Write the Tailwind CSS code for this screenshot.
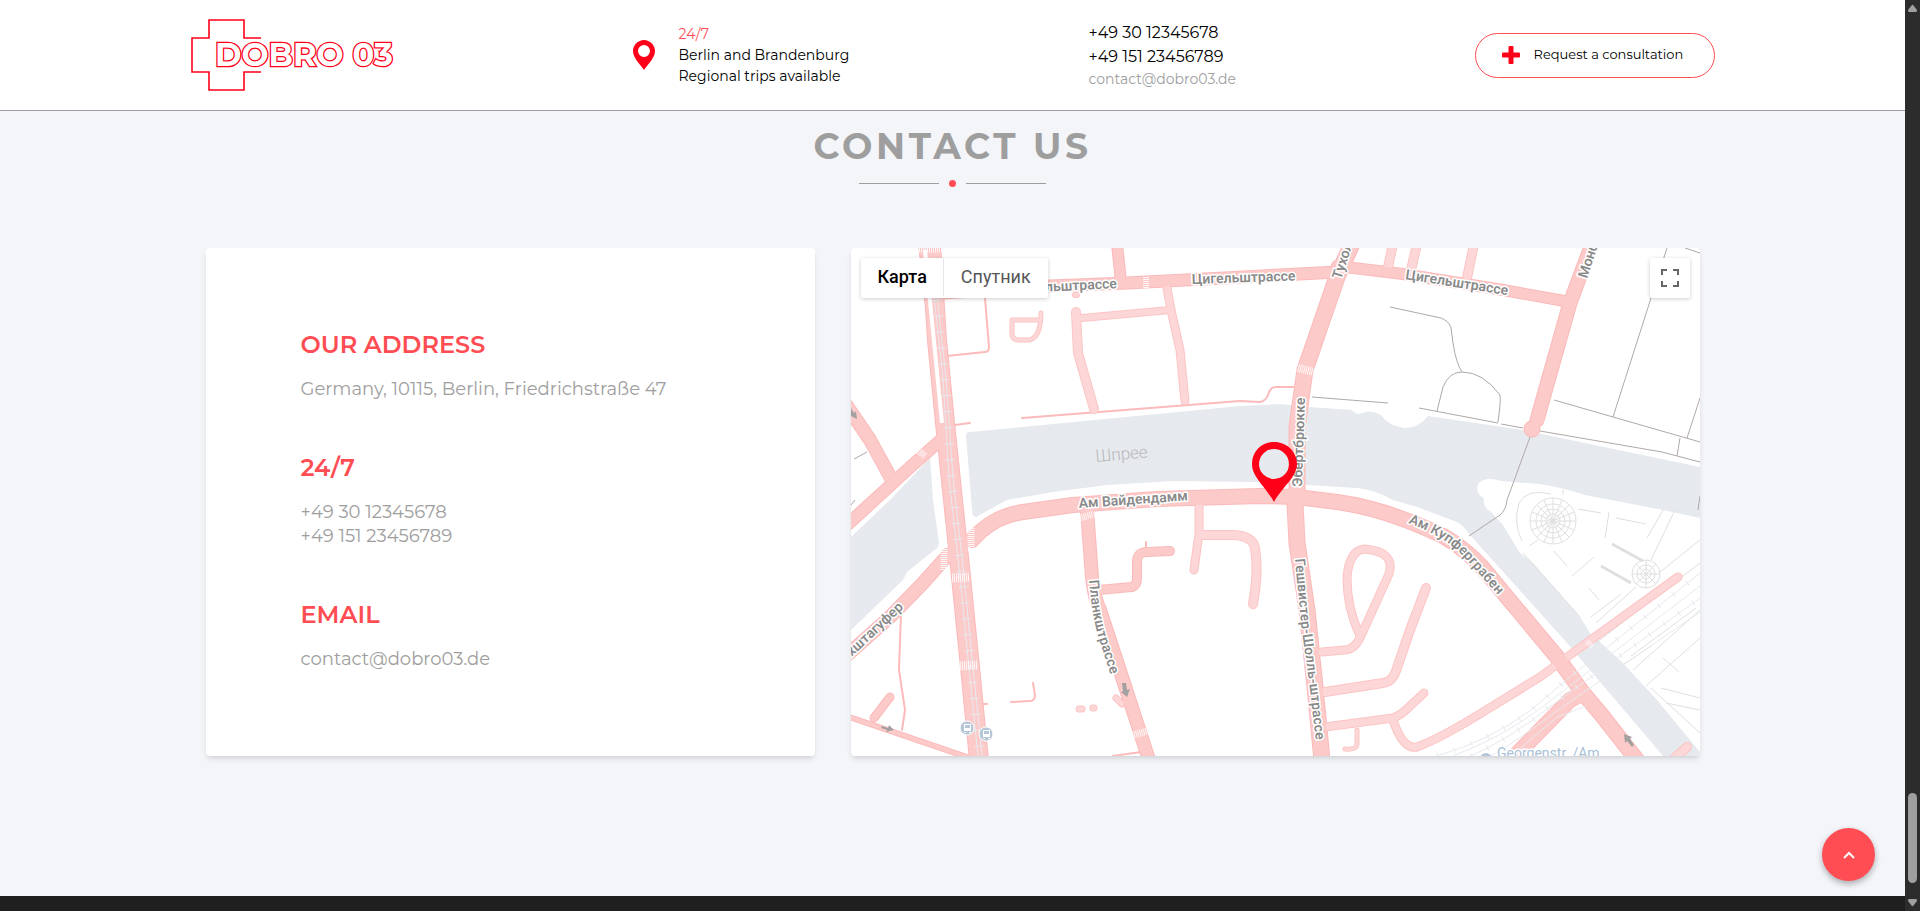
<!DOCTYPE html>
<html lang="en">
<head>
    <meta charset="UTF-8">
    <meta name="viewport" content="width=device-width, initial-scale=1.0">
    <title>DOBRO 03 - Contact us</title>
    <script src="https://cdn.jsdelivr.net/npm/@tailwindcss/browser@4"></script>
</head>
<body class="bg-[#f3f5f9] font-[Montserrat,Inter,sans-serif] text-black">
    <div class="flex min-h-screen">
        <div class="flex min-w-0 flex-1 flex-col">

            <header class="border-b border-[#9e9fa4] bg-white">
                <div class="mx-auto flex h-[110px] w-4/5 items-center justify-between">
                    <a href="#" aria-label="DOBRO 03">
                        <svg width="203" height="72" viewBox="0 0 203 72" fill="none" stroke="#ff0019">
                            <path d="M70 19H53V1H18V19H1V53H18V71H53V53H70" stroke-width="1.6"/>
                            <text x="24" y="47" fill="#fff" font-family="Montserrat, Inter, sans-serif" font-size="32" font-weight="700" stroke-width="2.6" paint-order="stroke">DOBRO 03</text>
                        </svg>
                    </a>

                    <div class="flex items-center gap-6">
                        <svg width="22" height="30" viewBox="0 0 22 30" fill="#ff0019">
                            <path fill-rule="evenodd" d="M11 0C5 0 0 5 0 11c0 7 7 13 11 19 4-6 11-12 11-19C22 5 17 0 11 0zm0 5a6 6 0 1 1 0 12a6 6 0 0 1 0-12z"/>
                        </svg>
                        <div class="w-[171px] text-sm leading-[21px] whitespace-nowrap">
                            <p class="text-[#ff4d53]">24/7</p>
                            <p>Berlin and Brandenburg</p>
                            <p>Regional trips available</p>
                        </div>
                    </div>

                    <div class="flex w-[147px] flex-col text-base leading-6 whitespace-nowrap">
                        <a href="tel:+493012345678">+49 30 12345678</a>
                        <a href="tel:+4915123456789">+49 151 23456789</a>
                        <a href="mailto:contact@dobro03.de" class="text-sm leading-[21px] text-[#9e9e9e]">contact@dobro03.de</a>
                    </div>

                    <button class="flex h-[45px] w-60 items-center gap-3.5 rounded-full border border-[#ff4d53] pl-[26px] text-[13px] whitespace-nowrap">
                        <svg width="18" height="18" viewBox="0 0 18 18" fill="#ff0019"><rect x="6.5" width="5" height="18" rx="1"/><rect y="6.5" width="18" height="5" rx="1"/></svg>
                        Request a consultation
                    </button>
                </div>
            </header>

            <main class="mx-auto w-4/5 flex-1 px-[15px] pt-[13px] pb-[140px]">
                <h1 class="text-center text-4xl leading-[44px] font-bold tracking-widest text-[#9e9e9e]">CONTACT US</h1>
                <div class="mt-3 flex items-center justify-center gap-2.5">
                    <span class="h-px w-20 bg-[#9e9e9e]"></span>
                    <span class="size-[7px] rounded-full bg-[#ff4d53]"></span>
                    <span class="h-px w-20 bg-[#9e9e9e]"></span>
                </div>

                <div class="mt-[61px] grid grid-cols-[609fr_849fr] gap-9">
                    <section class="rounded-sm bg-white px-[95px] pt-[81px] text-lg leading-6 text-[#9e9e9e] shadow-md">
                        <h2 class="mb-4 text-2xl leading-8 font-semibold text-[#ff4d53]">OUR ADDRESS</h2>
                        <p class="mb-[51px]">Germany, 10115, Berlin, Friedrichstraße 47</p>
                        <h2 class="mb-4 text-2xl leading-8 font-semibold text-[#ff4d53]">24/7</h2>
                        <p class="mb-[51px]">
                            <a href="tel:+493012345678">+49 30 12345678</a><br>
                            <a href="tel:+4915123456789">+49 151 23456789</a>
                        </p>
                        <h2 class="mb-4 text-2xl leading-8 font-semibold text-[#ff4d53]">EMAIL</h2>
                        <p><a href="mailto:contact@dobro03.de">contact@dobro03.de</a></p>
                    </section>

                    <section class="relative h-[508px] overflow-hidden rounded-sm bg-white font-[Roboto,sans-serif] shadow-md">
                        <svg class="size-full" viewBox="0 0 849 508" preserveAspectRatio="xMidYMid slice" fill="none">
                            <!-- water -->
                            <g fill="#e6e9ee">
                                <path d="M115 188Q115 184 119 184L171 179L389 158L429 156L457 159L501 162Q506 168 511 165Q519 161 530 167Q537 178 554 180Q568 180 577 168L672 182L849 219V270L812 262L734 247Q705 238 688 236L650 233Q634 228 627 236Q624 246 633 250Q631 258 640 264L652 277L669 305L682 315L729 369L739 385L772 415L806 452L849 504V508H812L716 395L619 287Q612 277 606 274L566 259L542 252Q524 242 506 240L456 237L402 234L322 233L256 237L202 244L156 252L125 269Q121 269 121 262Z"/>
                                <path d="M79 210L82 252L88 295Q87 301 81 304L56 324L52 332L0 382V289L39 252Z"/>
                            </g>

                            <!-- museum island buildings -->
                            <g stroke="#dfdfdf" stroke-width="1">
                                <circle cx="702" cy="273" r="23"/><circle cx="702" cy="273" r="17"/><circle cx="702" cy="273" r="12"/><circle cx="702" cy="273" r="7"/>
                                <path d="M702 250V296M679 273H725M686 257L718 289M686 289L718 257M693 252L711 294M711 252L693 294M681 264L723 282M681 282L723 264"/>
                                <circle cx="795" cy="326" r="14"/><circle cx="795" cy="326" r="9"/><circle cx="795" cy="326" r="5"/>
                                <path d="M795 312V340M781 326H809M785 316L805 336M785 336L805 316"/>
                                <path d="M727 261L750 265M758 264L754 290M765 270L795 276M671 293Q662 275 668 255Q676 240 700 246M678 298L687 292M703 303L716 318M721 328L743 309M738 340L748 352M745 375L785 339M740 369L770 346M809 324L849 292M812 262L796 290M824 262L800 312M712 247V242M672 305L729 369M773 416L800 398M782 422L849 362M795 438L849 390M800 440L849 485M812 410L828 424M780 408L845 360M810 440L849 450M815 455L849 462M745 395L849 315"/>
                                <path d="M761 296L792 313M750 318L780 335" stroke-width="3"/>
                            </g>

                            <g id="roads"></g>

                            <!-- tram and railway tracks -->
                            <path d="M74 2L91 175" stroke="#fff" stroke-width="4"/>
                            <g stroke="#e6e9ee">
                                <path d="M80 20L92 130L98 230L108 319L116 400L127 508" stroke-width="1"/>
                                <path d="M83 20L95 130L102 230L112 319L120 400L131 508" stroke-width="1"/>
                                <path d="M82 20L94 130L100 230L110 319L118 400L129 508" stroke-width="9" stroke-dasharray="1 15"/>
                                <path d="M586 508Q640 492 680 462L719 429L849 325M602 508Q650 490 690 460L849 338M620 508Q660 490 700 458L849 350M640 508Q670 490 710 460L849 364M660 508L705 470L735 458"/>
                                <path d="M586 508Q640 492 680 462L719 429L849 325M620 508Q660 490 700 458L849 350" stroke-width="6" stroke-dasharray="1 17"/>
                            </g>

                            <!-- zebra crossings -->
                            <g stroke="#fff" stroke-opacity=".85" stroke-dasharray="1 1">
                                <path d="M66 2H92" stroke-width="5"/>
                                <path d="M64 200L74 208" stroke-width="7"/>
                                <path d="M101 330L119 329M109 418L127 417" stroke-width="9"/>
                                <path d="M229 270L243 266M283 487L296 483" stroke-width="7"/>
                                <path d="M93 297V323M120 278V303" stroke-width="7"/>
                                <path d="M295 29V40" stroke-width="6"/>
                                <path d="M447 120L463 124" stroke-width="8"/>
                                <path d="M736 394L742 398" stroke-width="5"/>
                            </g>

                            <!-- footpaths -->
                            <g stroke="#b0a8a8" stroke-width="1">
                                <path d="M539 59L590 70Q598 73 600 80L602 95Q605 115 611 124M586 163L592 139Q598 124 611 124Q632 124 649 147Q650 152 647 174M461 149L537 155M568 160L647 175M650 176L672 180M689 183L811 204L849 214M703 152L849 194M816 0L762 169M849 150L836 190M829 190L826 208M834 0L849 5M679 189L656 252Q655 262 649 267L618 288M3 211L16 204M0 257L4 252M847 262L849 248"/>
                            </g>

                            <!-- one-way arrows -->
                            <g fill="#a5a0a0">
                                <path d="M271 435l4 0l1 7l3-1l-3 8l-6-5l2-1z"/>
                                <path d="M31 478l6 2l1-3l5 5l-8 2l1-2l-6-2z"/>
                                <path d="M781 499l-5-6l-2 2l-1-9l8 3l-2 2l4 6z"/>
                                <path d="M0 160l3 5l2-2l1 8l-6-3z"/>
                            </g>

                            <!-- stations -->
                            <g fill="#b4c6d8" stroke="#fff">
                                <circle cx="116" cy="480" r="7"/><circle cx="135" cy="486" r="7"/>
                            </g>
                            <g fill="#fff">
                                <path fill-rule="evenodd" d="M113 476h7v7h-7zM114 477v3h5v-3zM113 484h2v1h-2zM118 484h2v1h-2z"/>
                                <path fill-rule="evenodd" d="M132 482h7v7h-7zM133 483v3h5v-3zM132 490h2v1h-2zM137 490h2v1h-2z"/>
                            </g>
                            <circle cx="635" cy="511" r="6" fill="#b4c6d8"/>

                            <!-- labels -->
                            <defs>
                                <path id="planck" d="M238 332Q241 370 249 394L267 450"/>
                                <path id="scholl" d="M444 311L450 375L459 442L468 520"/>
                                <path id="kupfer" d="M557 275Q590 287 609 305Q625 322 660 362"/>
                            </defs>
                            <g fill="#8a8a8a" stroke="#fff" stroke-width="3" stroke-linejoin="round" paint-order="stroke" font-size="14" font-weight="600">
                                <text transform="translate(266 40) rotate(-3)" text-anchor="end">Цигельштрассе</text>
                                <text transform="translate(341 36) rotate(-2)">Цигельштрассе</text>
                                <text transform="translate(554 31) rotate(9)">Цигельштрассе</text>
                                <text transform="translate(490 32) rotate(-72)">Тухольскиштрассе</text>
                                <text transform="translate(736 31) rotate(-72)">Монбижуштрассе</text>
                                <text transform="translate(451 239) rotate(-88)">Эбертбрюкке</text>
                                <text transform="translate(228 260) rotate(-4)">Ам Вайдендамм</text>
                                <text transform="translate(53 360) rotate(-43)" text-anchor="end">Рейхштагуфер</text>
                                <text><textPath href="#planck">Планкштрассе</textPath></text>
                                <text><textPath href="#scholl">Гешвистер-Шолль-штрассе</textPath></text>
                                <text><textPath href="#kupfer">Ам Купферграбен</textPath></text>
                                <text x="646" y="510" fill="#a9bfd6" font-weight="400">Georgenstr. /Am</text>
                            </g>
                            <text transform="translate(245 214) rotate(-5)" fill="#b8b8b8" font-size="17" font-weight="300">Шпрее</text>

                            <!-- marker -->
                            <path fill="#ff0019" fill-rule="evenodd" d="M423 194C410 194 401 204 401 216C401 229 414 238 423 254C432 238 446 229 446 216C446 204 436 194 423 194zM423 201a15 15 0 1 1 0 30a15 15 0 0 1 0-30z"/>
                        </svg>

                        <div class="absolute top-2.5 left-2.5 flex h-10 rounded-xs bg-white pb-0.5 text-lg shadow-[0_1px_4px_rgba(0,0,0,0.2)]">
                            <button class="pr-4 pl-[17px] font-medium">Карта</button>
                            <button class="border-l border-gray-200 px-[17px] text-[#565656]">Спутник</button>
                        </div>
                        <button aria-label="Fullscreen" class="absolute top-2.5 right-2.5 flex size-10 items-center justify-center rounded-xs bg-white shadow-[0_1px_4px_rgba(0,0,0,0.2)]">
                            <svg width="18" height="18" viewBox="0 0 18 18" fill="none" stroke="#666" stroke-width="2"><path d="M1 6V1H6M12 1H17V6M17 12V17H12M6 17H1V12"/></svg>
                        </button>
                    </section>
                </div>
            </main>

            <footer class="h-[15px] bg-[#1f1f1f]"></footer>
        </div>

        <!-- scrollbar -->
        <div class="flex w-[15px] flex-col items-center bg-[#2c2c2c] py-1">
            <svg width="9" height="8" viewBox="0 0 9 8" fill="#9f9f9f"><path d="M3.500 1.500Q4.500 0 5.500 1.500L9 6Q9 8 8 8H1Q0 8 0 6Z"/></svg>
            <div class="mt-auto mb-4 h-[90px] w-[9px] rounded-full bg-[#9f9f9f]"></div>
            <svg width="9" height="8" viewBox="0 0 9 8" fill="#9f9f9f"><path d="M3.500 6.500Q4.500 8 5.500 6.500L9 2Q9 0 8 0H1Q0 0 0 2Z"/></svg>
        </div>
    </div>

    <button aria-label="Back to top" class="fixed right-[45px] bottom-[30px] flex size-[53px] items-center justify-center rounded-full bg-[#ff4d53] shadow-[0_3px_6px_rgba(0,0,0,0.3)]">
        <svg width="12" height="8" viewBox="0 0 12 8" fill="none" stroke="#fff" stroke-width="2"><path d="M1 7L6 2L11 7"/></svg>
    </button>

    <script>
        // [path, width]
        const smallRoads = [
            ['M225 64L227 105L243 161', 9],
            ['M231 70L319 62', 7],
            ['M224 47H226', 5],
            ['M316 40L320 62L329 102L334 153', 8],
            ['M190 65Q190 88 179 92H168Q161 92 161 85V72H188', 4],
            ['M542 -4L537 19', 9],
            ['M566 -4L560 22', 9],
            ['M623 -4L616 30', 9],
            ['M348 255V285L343 322', 8],
            ['M351 287H382Q402 288 404 300Q408 325 402 356', 9],
            ['M509 388Q496 360 496 330Q498 302 514 301Q545 304 538 326L509 390Q503 402 493 402L471 404', 8],
            ['M575 340L559 382L546 420Q542 434 532 435L474 444', 9],
            ['M474 479L542 470Q552 466 559 458L573 445', 8],
            ['M542 472Q552 502 566 499Q590 490 632 464L689 429L712 412L827 329', 8],
            ['M506 482V496Q506 502 494 501', 4],
            ['M836 499L824 510', 9],
            ['M228 461H231M242 460H243M265 450L271 456', 6]
        ];
        const mainRoads = [
            ['M80 -5L86 92L94 175L102 252L109 319L119 419L128 512', 19],
            ['M70 -4L90 175', 5],
            ['M92 45L199 38L276 35L429 27L486 24', 12],
            ['M486 18L552 26L652 42L719 54', 11],
            ['M266 -4L270 34', 11],
            ['M501 -4L486 29L454 122L446 179V246', 16],
            ['M121 292Q142 268 172 264L222 257L306 251L409 248L446 249L486 254Q530 260 579 282Q605 292 630 318L706 409L732 445L749 465L786 512', 15],
            ['M741 -4L719 55L686 172', 14],
            ['M681 181V181', 16],
            ['M444 255L446 295L456 362L464 439L471 512', 16],
            ['M236 262L241 329Q243 350 249 362L272 432L298 512', 13],
            ['M98 306L72 335L39 369L-6 409', 13],
            ['M-6 155L19 192L41 232', 13],
            ['M92 190L56 222L-4 277', 12],
            ['M-2 469L119 510', 5],
            ['M39 449L23 470', 8],
            ['M660 512L719 452L732 445', 15],
            ['M247 342L281 339Q286 337 286 330V314Q286 304 296 304L319 303', 9]
        ];
        const lanes = [
            ['M134 50L138 99Q138 104 134 104L96 108', 2],
            ['M171 170L389 153L409 154Q415 153 417 147Q419 139 425 139H442', 2],
            ['M104 177L119 175', 2],
            ['M50 365L48 422L54 462L51 482', 2],
            ['M160 454L179 453Q184 453 184 447L182 435', 2],
            ['M295 294V300M132 456H136M262 508L290 504', 2]
        ];

        const layer = document.getElementById('roads');

        function drawRoads(roads, color, extra) {
            for (const [d, width] of roads) {
                const path = document.createElementNS('http://www.w3.org/2000/svg', 'path');
                path.setAttribute('d', d);
                path.setAttribute('stroke', color);
                path.setAttribute('stroke-width', width + extra);
                path.setAttribute('stroke-linecap', 'round');
                path.setAttribute('stroke-linejoin', 'round');
                layer.appendChild(path);
            }
        }

        // casings go below the fills so that junctions stay open
        drawRoads(lanes, '#fdbaba', 0);
        drawRoads(smallRoads, '#fcc4c4', 1);
        drawRoads(mainRoads, '#fbb9b9', 1);
        drawRoads(smallRoads, '#fdd7d7', -1);
        drawRoads(mainRoads, '#fdcaca', -1);
    </script>
</body>
</html>
